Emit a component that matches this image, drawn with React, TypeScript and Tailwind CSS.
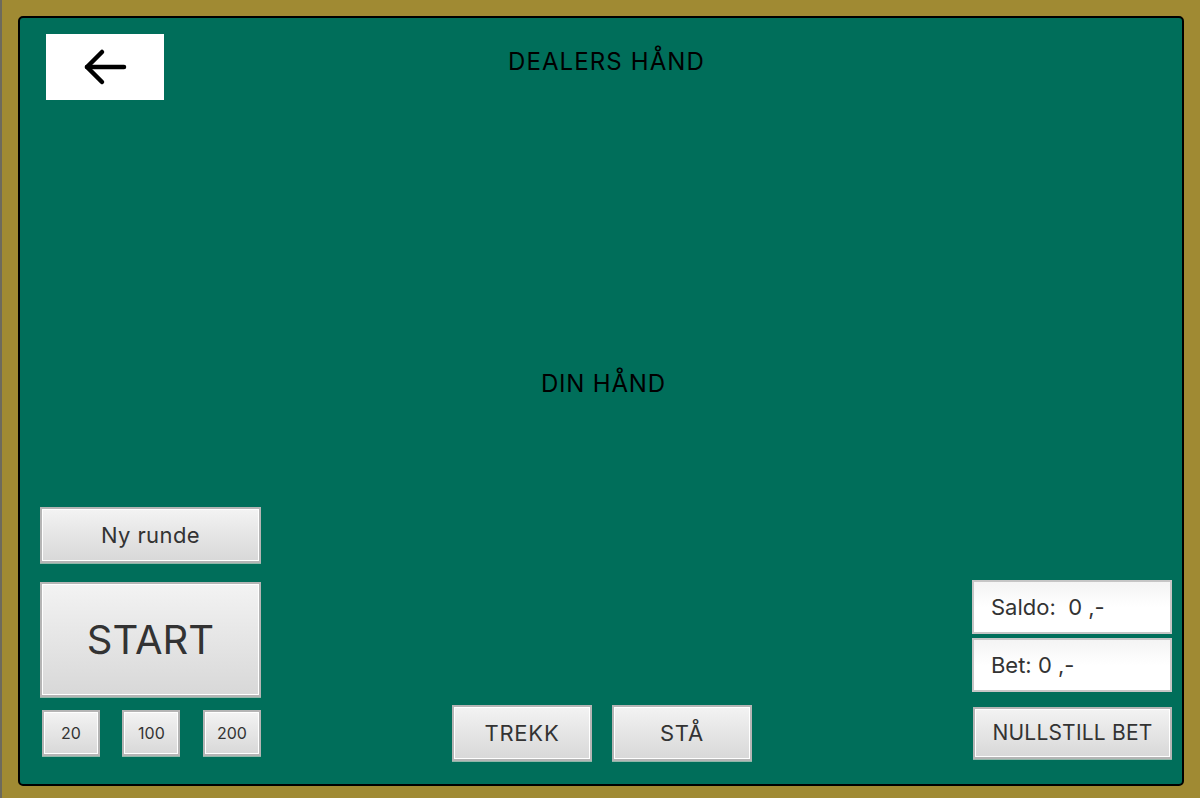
import React from 'react';

const btn =
  'flex items-center justify-center border-2 border-[#b5b5b5] bg-gradient-to-b from-[#f3f3f3] to-[#d8d8d8] text-[#333] shadow-[inset_0_0_0_1px_#ffffff,0_1px_0_#8fb7a9]';

const App: React.FC = () => {
  return (
    <div className="w-[1200px] h-[798px] bg-[#a08a33] border-l-2 border-[#6d6a5c] pl-[16px] pt-[16px] font-['Inter',sans-serif]">
      <div className="w-[1166px] h-[770px] rounded-[5px] border-2 border-black bg-[#006e5a] flex flex-col">
        {/* Top row - back + dealer */}
        <div className="flex items-start pt-[16px] pl-[26px]">
          <button className="w-[118px] h-[66px] bg-white flex items-center justify-center">
            <svg width="46" height="38" viewBox="0 0 46 38" fill="none" stroke="#000" strokeWidth="4.5" strokeLinecap="round" strokeLinejoin="round">
              <path d="M42 19H5" />
              <path d="M20 4L5 19L20 34" />
            </svg>
          </button>
          <div className="ml-[344px] mt-[13px] text-[24px] leading-[30px] tracking-[1.1px] text-black">DEALERS HÅND</div>
        </div>

        {/* Player hand */}
        <div className="mt-[269px] ml-[521px] text-[24px] leading-[30px] tracking-[0.8px] text-black">DIN HÅND</div>

        {/* Bottom controls */}
        <div className="flex-1 flex items-end pl-[20px] pr-[10px]">
          <div className="flex flex-col w-[222px] mb-[28px]">
            <button className={`${btn} h-[56px] text-[22px] tracking-[0.4px]`}>Ny runde</button>
            <button className={`${btn} h-[115px] mt-[19px] text-[40px]`}>START</button>
            <div className="flex justify-between mt-[13px] pl-[2px]">
              <button className={`${btn} w-[58px] h-[46px] text-[16px]`}>20</button>
              <button className={`${btn} w-[58px] h-[46px] text-[16px]`}>100</button>
              <button className={`${btn} w-[58px] h-[46px] text-[16px]`}>200</button>
            </div>
          </div>

          <div className="flex gap-[20px] ml-[191px] mb-[23px]">
            <button className={`${btn} w-[140px] h-[56px] text-[22px] tracking-[0.8px]`}>TREKK</button>
            <button className={`${btn} w-[140px] h-[56px] text-[22px] tracking-[0.8px]`}>STÅ</button>
          </div>

          <div className="flex flex-col w-[201px] ml-[220px] mb-[25px]">
            <div className="h-[54px] bg-gradient-to-b from-[#f4f4f4] via-white to-white border-2 border-[#c6c6c6] flex items-center pl-[17px] text-[22px] text-[#333] whitespace-pre">
              Saldo:  0 ,-
            </div>
            <div className="h-[54px] mt-[4px] bg-gradient-to-b from-[#f4f4f4] via-white to-white border-2 border-[#c6c6c6] flex items-center pl-[17px] text-[22px] text-[#333] whitespace-pre">
              Bet: 0 ,-
            </div>
            <button className={`${btn} h-[52px] mt-[15px] ml-[1px] text-[21px] tracking-[0.2px]`}>NULLSTILL BET</button>
          </div>
        </div>
      </div>
    </div>
  );
};

export default App;
